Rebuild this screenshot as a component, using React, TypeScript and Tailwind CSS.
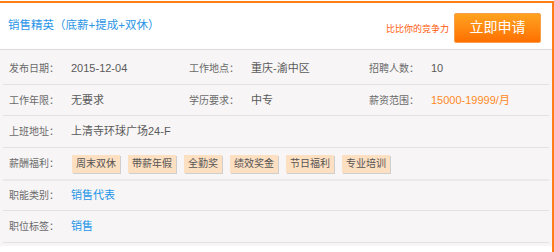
const font = { fontFamily: '"Liberation Sans", "Noto Sans CJK SC", sans-serif' };

type Cell = { label: string; value: string; tone?: "orange" | "blue" };

function Field({ label, value, tone }: Cell) {
  const color = tone === "orange" ? "text-[#ff8a1f]" : tone === "blue" ? "text-[#1d95e8]" : "text-[#5a5a5a]";
  return (
    <div className="flex w-[182px] items-center">
      <span className="w-[62px] shrink-0 text-[10px] text-[#6a6a6a]">{label}</span>
      <span className={`text-[11px] ${color}`}>{value}</span>
    </div>
  );
}

const tags = ["周末双休", "带薪年假", "全勤奖", "绩效奖金", "节日福利", "专业培训"];

export default function App() {
  return (
    <div className="w-[554px] bg-white pt-px" style={font}>
      <div className="border-t-2 border-r-2 border-[#ff7e1a] pb-[6px]">
        <div className="flex h-[47px] items-center justify-between border-b border-[#dcdcdc] pl-2 pr-[11px]">
          <span className="text-[11.5px] text-[#2b95e6]">销售精英（底薪+提成+双休）</span>
          <div className="flex items-center gap-[5px] pt-[3px]">
            <span className="mt-[5px] text-[9px] text-[#ff5a0a]">比比你的竞争力</span>
            <button className="h-[30px] w-[87px] rounded-[2px] border border-[#f5a04a] bg-gradient-to-b from-[#ffa21f] to-[#ff6f00] text-[14px] text-white">
              立即申请
            </button>
          </div>
        </div>

        <div className="bg-[#f7f5f6] px-[3px] pt-[3px] pb-[3px]">
          <div className="flex h-[32px] items-center border-b border-[#e3e1e2] pl-[6px]">
            <Field label="发布日期：" value="2015-12-04" />
            <Field label="工作地点：" value="重庆-渝中区" />
            <Field label="招聘人数：" value="10" />
          </div>
          <div className="flex h-[31px] items-center border-b border-[#e3e1e2] pl-[6px]">
            <Field label="工作年限：" value="无要求" />
            <Field label="学历要求：" value="中专" />
            <Field label="薪资范围：" value="15000-19999/月" tone="orange" />
          </div>
          <div className="flex h-[32px] items-center border-b border-[#e3e1e2] pl-[6px]">
            <Field label="上班地址：" value="上清寺环球广场24-F" />
          </div>
          <div className="flex h-[33px] items-center border-b-2 border-[#ebe9ea] pl-[6px]">
            <span className="w-[63px] shrink-0 text-[10px] text-[#6a6a6a]">薪酬福利：</span>
            <div className="flex gap-2">
              {tags.map((t) => (
                <span
                  key={t}
                  className="flex h-[18px] items-center bg-[#fddfc2] px-[4px] text-[10px] text-[#555] shadow-[1px_1px_0_#cfcfcf]"
                >
                  {t}
                </span>
              ))}
            </div>
          </div>
          <div className="flex h-[30px] items-center border-b border-[#e3e1e2] pl-[6px]">
            <Field label="职能类别：" value="销售代表" tone="blue" />
          </div>
          <div className="flex h-[32px] items-center border-b border-[#e3e1e2] pl-[6px]">
            <Field label="职位标签：" value="销售" tone="blue" />
          </div>
        </div>
      </div>
    </div>
  );
}
